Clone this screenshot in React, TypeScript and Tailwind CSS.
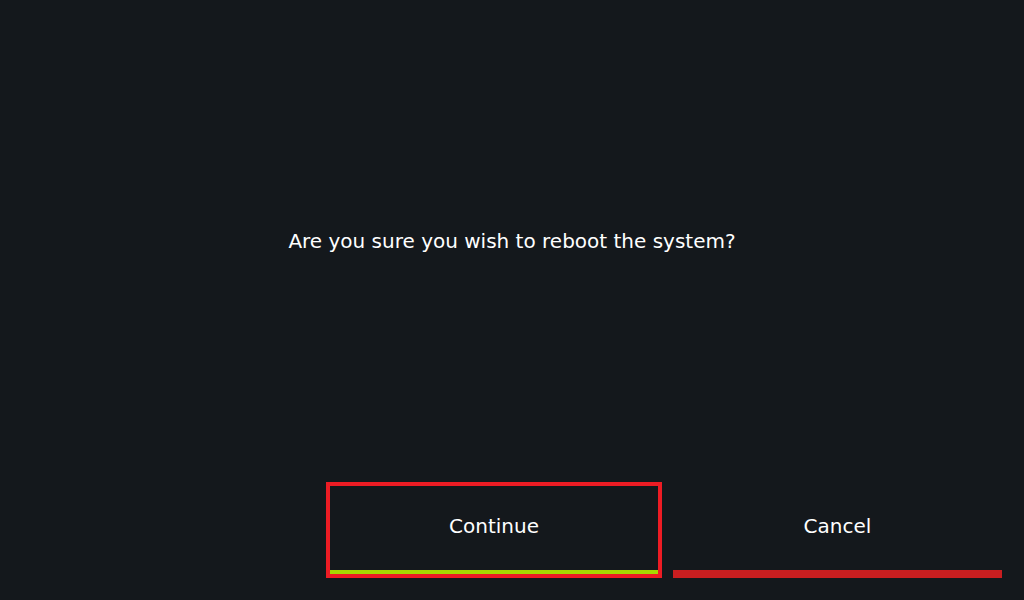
export default function App() {
  return (
    <div
      className="flex h-[600px] w-[1024px] flex-col bg-[#14181c] text-white"
      style={{ fontFamily: '"DejaVu Sans", sans-serif' }}
    >
      <div className="flex flex-1 items-center justify-center">
        <p className="text-[20px]">Are you sure you wish to reboot the system?</p>
      </div>
      <div className="flex justify-end gap-[11px] pb-[22px] pr-[22px]">
        <div className="flex h-[96px] w-[336px] flex-col border-4 border-[#ed1c24]">
          <div className="flex flex-1 items-center justify-center pb-1 text-[20px]">Continue</div>
          <div className="h-[4px] bg-[#a8d800]" />
        </div>
        <div className="flex h-[96px] w-[329px] flex-col">
          <div className="flex flex-1 items-center justify-center text-[20px]">Cancel</div>
          <div className="h-[8px] bg-[#c91e20]" />
        </div>
      </div>
    </div>
  );
}
